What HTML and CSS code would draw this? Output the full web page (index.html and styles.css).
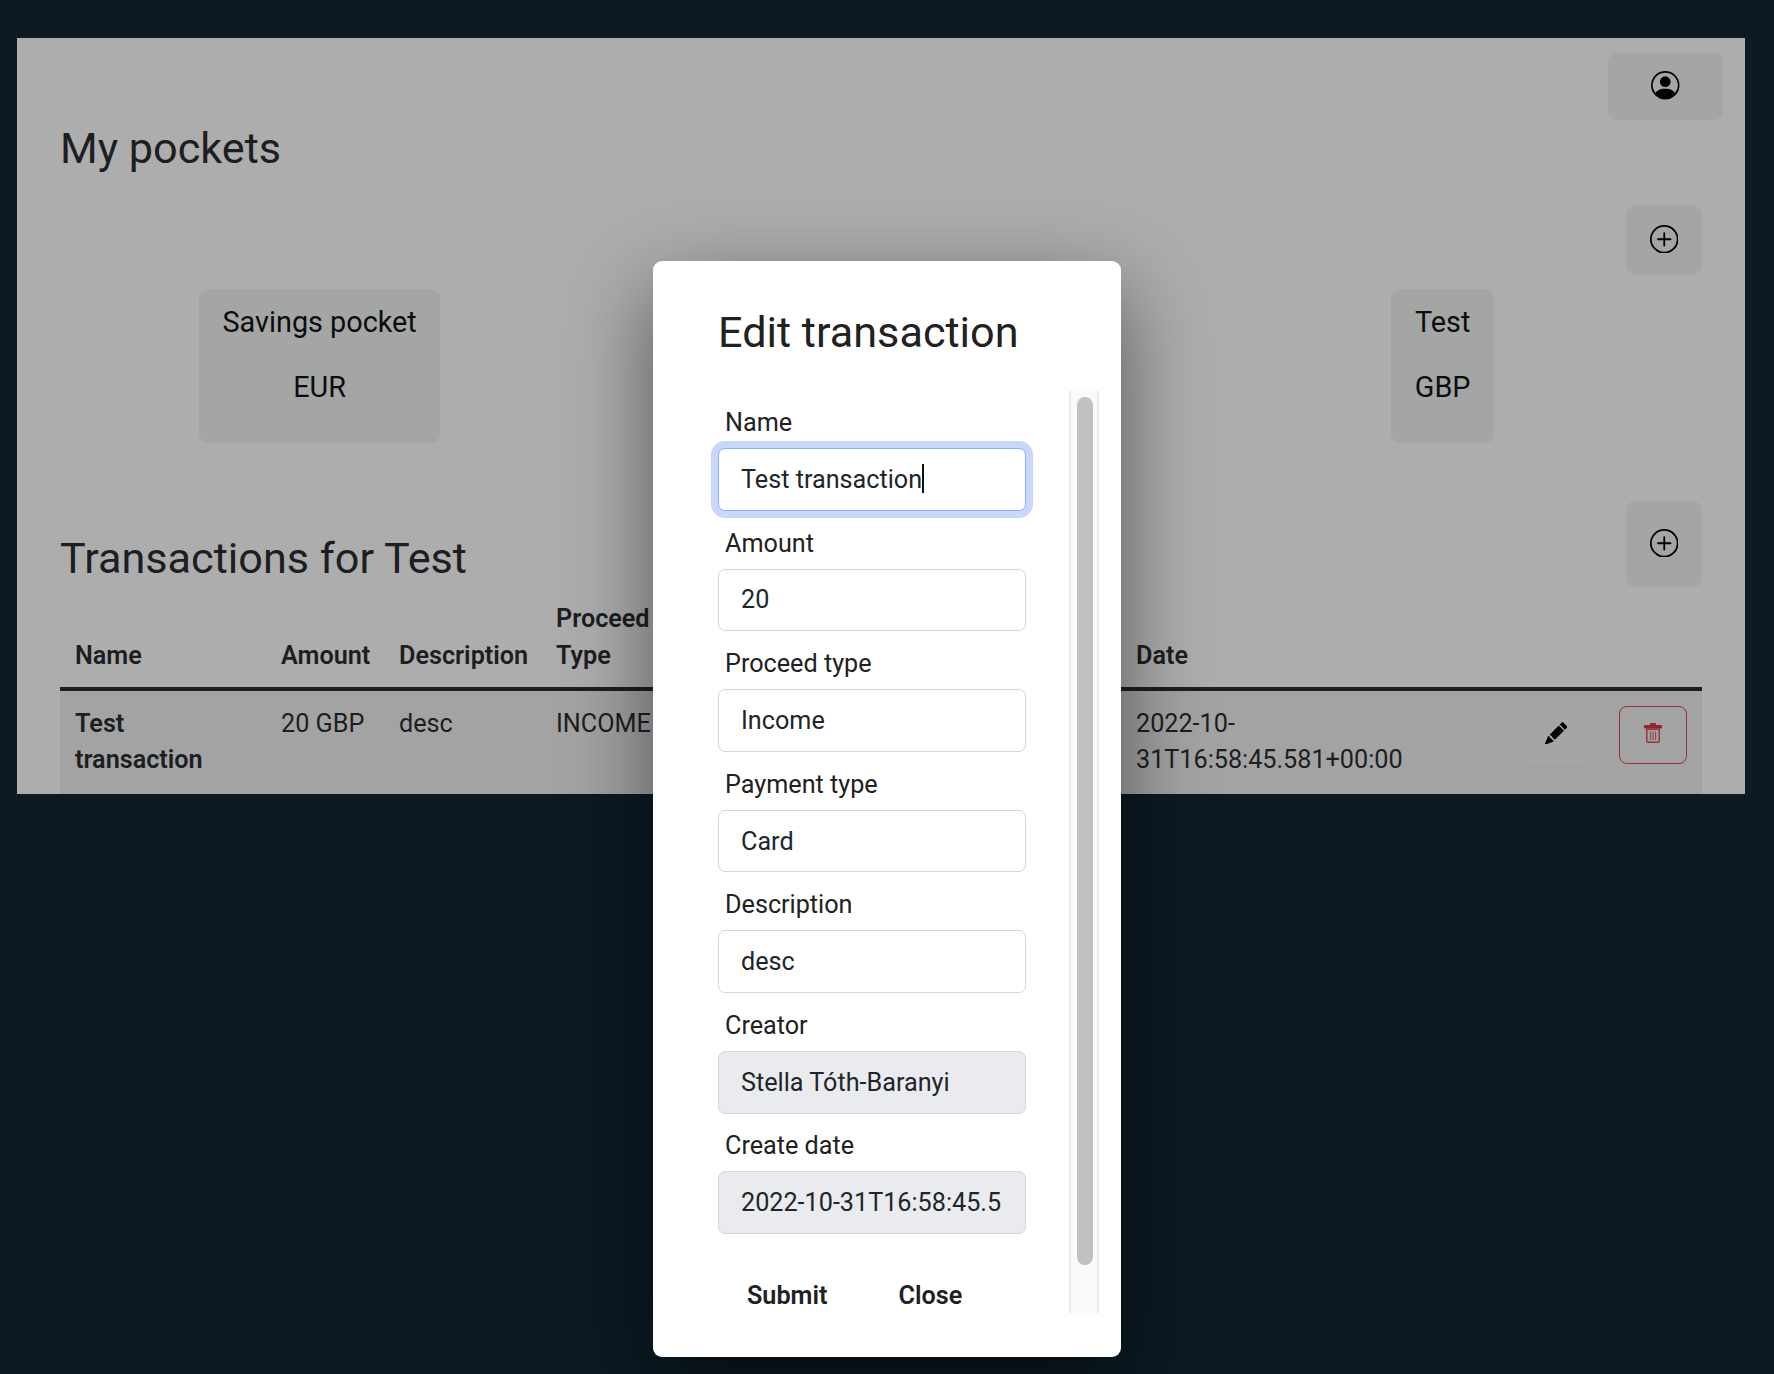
FILE: index.html
```html
<!DOCTYPE html>
<html lang="en">
<head>
    <meta charset="UTF-8">
    <title>My pockets</title>
    <link rel="stylesheet" href="styles.css">
</head>
<body>
    <div class="panel">
        <div class="topbar">
            <button class="icon-btn account-btn" type="button">
                <svg class="icon" viewBox="0 0 16 16" fill="currentColor">
                    <path d="M11 6a3 3 0 1 1-6 0 3 3 0 0 1 6 0z"/>
                    <path fill-rule="evenodd" d="M0 8a8 8 0 1 1 16 0A8 8 0 0 1 0 8zm8-7a7 7 0 0 0-5.468 11.37C3.242 11.226 4.805 10 8 10s4.757 1.225 5.468 2.37A7 7 0 0 0 8 1z"/>
                </svg>
            </button>
        </div>

        <h2 class="page-title">My pockets</h2>

        <div class="add-row">
            <button class="icon-btn add-btn" type="button">
                <svg class="icon" viewBox="0 0 16 16" fill="currentColor">
                    <path d="M8 15A7 7 0 1 1 8 1a7 7 0 0 1 0 14zm0 1A8 8 0 1 0 8 0a8 8 0 0 0 0 16z"/>
                    <path d="M8 4a.5.5 0 0 1 .5.5v3h3a.5.5 0 0 1 0 1h-3v3a.5.5 0 0 1-1 0v-3h-3a.5.5 0 0 1 0-1h3v-3A.5.5 0 0 1 8 4z"/>
                </svg>
            </button>
        </div>

        <div class="pockets">
            <div class="pocket">
                <p>Savings pocket</p>
                <p>EUR</p>
            </div>
            <div class="pocket pocket-last">
                <p>Test</p>
                <p>GBP</p>
            </div>
        </div>

        <div class="section-head">
            <h2 class="page-title">Transactions for Test</h2>
            <button class="icon-btn add-btn add-btn-tall" type="button">
                <svg class="icon" viewBox="0 0 16 16" fill="currentColor">
                    <path d="M8 15A7 7 0 1 1 8 1a7 7 0 0 1 0 14zm0 1A8 8 0 1 0 8 0a8 8 0 0 0 0 16z"/>
                    <path d="M8 4a.5.5 0 0 1 .5.5v3h3a.5.5 0 0 1 0 1h-3v3a.5.5 0 0 1-1 0v-3h-3a.5.5 0 0 1 0-1h3v-3A.5.5 0 0 1 8 4z"/>
                </svg>
            </button>
        </div>

        <table class="tx-table">
            <colgroup>
                <col class="col-name">
                <col class="col-amount">
                <col class="col-desc">
                <col class="col-type">
                <col class="col-date">
                <col class="col-actions">
            </colgroup>
            <thead>
                <tr>
                    <th>Name</th>
                    <th>Amount</th>
                    <th>Description</th>
                    <th>Proceed<br>Type</th>
                    <th>Date</th>
                    <th></th>
                </tr>
            </thead>
            <tbody>
                <tr>
                    <th>Test transaction</th>
                    <td>20 GBP</td>
                    <td>desc</td>
                    <td>INCOME</td>
                    <td>2022-10-31T16:58:45.581+00:00</td>
                    <td>
                        <div class="row-actions">
                            <button class="row-btn" type="button">
                                <svg class="pencil" viewBox="0 0 16 16" fill="currentColor">
                                    <path d="M12.854.146a.5.5 0 0 0-.707 0L10.5 1.793 14.207 5.5l1.647-1.646a.5.5 0 0 0 0-.708l-3-3zm.646 6.061L9.793 2.5 3.293 9H3.5a.5.5 0 0 1 .5.5v.5h.5a.5.5 0 0 1 .5.5v.5h.5a.5.5 0 0 1 .5.5v.5h.5a.5.5 0 0 1 .5.5v.207l6.5-6.5zm-7.468 7.468A.5.5 0 0 1 6 13.5V13h-.5a.5.5 0 0 1-.5-.5V12h-.5a.5.5 0 0 1-.5-.5V11h-.5a.5.5 0 0 1-.5-.5V10h-.5a.499.499 0 0 1-.175-.032l-.179.178a.5.5 0 0 0-.11.168l-2 5a.5.5 0 0 0 .65.65l5-2a.5.5 0 0 0 .168-.11l.178-.178z"/>
                                </svg>
                            </button>
                            <button class="row-btn row-btn-danger" type="button">
                                <svg class="trash" viewBox="0 0 18 20" fill="currentColor">
                                    <rect x="6" y="0" width="6" height="3" rx="1"/>
                                    <rect x="0" y="2" width="18" height="3.500" rx="1"/>
                                    <path fill-rule="evenodd" d="M2 5.500h14V18a2 2 0 0 1-2 2H4a2 2 0 0 1-2-2V5.500zm1.500 1.500V17.500c0 .6.400 1 1 1h9c.6 0 1-.4 1-1V7z" opacity=".85"/>
                                    <rect x="5.900" y="8.500" width="1.200" height="8.500" opacity=".7"/>
                                    <rect x="8.400" y="8.500" width="1.200" height="8.500" opacity=".7"/>
                                    <rect x="10.900" y="8.500" width="1.200" height="8.500" opacity=".7"/>
                                </svg>
                            </button>
                        </div>
                    </td>
                </tr>
            </tbody>
        </table>
    </div>

    <div class="modal">
        <h2 class="modal-title">Edit transaction</h2>
        <div class="modal-main">
            <form class="tx-form">
                <div class="field">
                    <label for="name">Name</label>
                    <input class="focused" id="name" type="text" value="Test transaction">
                    <span class="caret"></span>
                </div>
                <div class="field">
                    <label for="amount">Amount</label>
                    <input id="amount" type="text" value="20">
                </div>
                <div class="field">
                    <label for="proceed">Proceed type</label>
                    <input id="proceed" type="text" value="Income">
                </div>
                <div class="field">
                    <label for="payment">Payment type</label>
                    <input id="payment" type="text" value="Card">
                </div>
                <div class="field">
                    <label for="description">Description</label>
                    <input id="description" type="text" value="desc">
                </div>
                <div class="field">
                    <label for="creator">Creator</label>
                    <input id="creator" type="text" value="Stella Tóth-Baranyi" disabled>
                </div>
                <div class="field">
                    <label for="created">Create date</label>
                    <input id="created" type="text" value="2022-10-31T16:58:45.581+00:00" disabled>
                </div>
                <div class="form-buttons">
                    <button type="button">Submit</button>
                    <button type="button">Close</button>
                </div>
            </form>
            <div class="scroll-track"><div class="scroll-thumb"></div></div>
        </div>
    </div>
</body>
</html>
```

FILE: styles.css
```css
* {
    box-sizing: border-box;
    font-family: Roboto, sans-serif;
}

body {
    background-color: #0c1a24;
    color: #1c1e21;
    margin: 0;
    min-height: 1374px;
    padding: 38px 29px 0 17px;
    font-size: 25.2px;
    line-height: 37px;
}

button {
    border: 0;
    background: none;
    color: inherit;
    font-size: inherit;
    padding: 0;
}

/* dimmed page behind the modal */
.panel {
    height: 756px;
    overflow: hidden;
    background-color: #adadad;
    padding: 15px 43px 0;
}

.topbar {
    display: flex;
    justify-content: flex-end;
    margin-right: -21px;
}

.icon-btn {
    display: flex;
    align-items: center;
    justify-content: center;
    background-color: #a4a6a5;
    border-radius: 9px;
    color: #000;
}

.icon {
    width: 28.5px;
    height: 28.5px;
}

.account-btn {
    width: 115px;
    height: 67px;
    padding-bottom: 2px;
}

.page-title {
    margin: 3px 0 0;
    font-size: 43.2px;
    font-weight: 400;
    line-height: 52px;
}

.add-row {
    display: flex;
    justify-content: flex-end;
    margin-top: 31px;
}

.add-btn {
    width: 76px;
    height: 68px;
    padding-bottom: 2px;
}

.add-btn-tall {
    height: 86px;
}

.pockets {
    display: flex;
    justify-content: space-between;
    margin-top: 15px;
    padding: 0 208px 0 139px;
}

.pocket {
    height: 154px;
    padding: 15px 23.5px;
    background-color: #a4a6a5;
    border-radius: 9px;
    color: #0c0d0e;
    text-align: center;
    font-size: 28.8px;
}

.pocket p {
    margin: 0 0 28px;
}

.section-head {
    display: flex;
    justify-content: space-between;
    align-items: flex-end;
    margin-top: 58px;
}

.section-head .page-title {
    margin: 0;
    padding-bottom: 2px;
}

.tx-table {
    width: 100%;
    table-layout: fixed;
    border-collapse: collapse;
}

.col-name { width: 206px; }
.col-amount { width: 118px; }
.col-desc { width: 157px; }
.col-type { width: 580px; }
.col-date { width: 297px; }
.col-actions { width: 284px; }

.tx-table th,
.tx-table td {
    padding: 15px 15px 16px;
    text-align: left;
    vertical-align: top;
    font-weight: 400;
    line-height: 36px;
}

.tx-table th {
    font-weight: 600;
}

.tx-table thead th {
    padding: 13px 15px;
    line-height: 37px;
    vertical-align: bottom;
    border-bottom: 4px solid #1c1e21;
}

.tx-table tbody tr {
    background-color: #a3a3a3;
}

.row-actions {
    display: flex;
    justify-content: flex-end;
    gap: 29px;
}

.row-btn {
    display: flex;
    align-items: center;
    justify-content: center;
    width: 68px;
    height: 58px;
    padding-bottom: 4px;
    background-color: #a4a6a5;
    border-radius: 8px;
    color: #000;
}

.row-btn-danger {
    background: none;
    border: 1.5px solid #9b3035;
    color: #93242a;
}

.pencil {
    width: 22.5px;
    height: 22.5px;
}

.trash {
    width: 18px;
    height: 20px;
}

/* modal sits over the page */
.modal {
    position: absolute;
    left: 653px;
    top: 261px;
    width: 468px;
    height: 1096px;
    padding: 0 22px 0 65px;
    background-color: #fff;
    border-radius: 9px;
    box-shadow: 0 30px 85px rgba(0, 0, 0, 0.5);
}

.modal-title {
    height: 130px;
    margin: 0;
    padding-top: 45px;
    font-size: 43.2px;
    font-weight: 400;
    line-height: 54px;
    color: #212121;
}

.modal-main {
    display: flex;
    justify-content: space-between;
    height: 922px;
}

.tx-form {
    width: 308px;
    padding-top: 13px;
}

.field {
    position: relative;
    margin-bottom: 13.9px;
}

.field label {
    display: block;
    margin-bottom: 6px;
    padding-left: 7px;
    line-height: 38px;
    color: #212121;
}

.field input {
    display: block;
    width: 100%;
    height: 62.7px;
    padding: 0 24px 0 22px;
    border: 1.5px solid #d3d6da;
    border-radius: 7px;
    outline: 0;
    background-color: #fff;
    color: #212529;
    font-size: 25.2px;
}

.field input:disabled {
    background-color: #e9ebef;
    color: #212529;
    opacity: 1;
}

.field input.focused {
    border-color: #86b0f5;
    box-shadow: 0 0 0 7px #c9d8fa;
}

.caret {
    position: absolute;
    left: 204px;
    top: 60px;
    width: 1.5px;
    height: 29px;
    background-color: #111;
}

.form-buttons {
    display: flex;
    gap: 13px;
    margin-top: 30px;
}

.form-buttons button {
    height: 62px;
    padding: 0 29px;
    font-weight: 600;
    color: #212121;
}

.scroll-track {
    width: 30px;
    height: 922px;
    padding: 6px;
    background-color: #fafafa;
    border-left: 2px solid #ebebeb;
    border-right: 2px solid #ebebeb;
}

.scroll-thumb {
    width: 16px;
    height: 868px;
    background-color: #c1c1c1;
    border-radius: 8px;
}
```
